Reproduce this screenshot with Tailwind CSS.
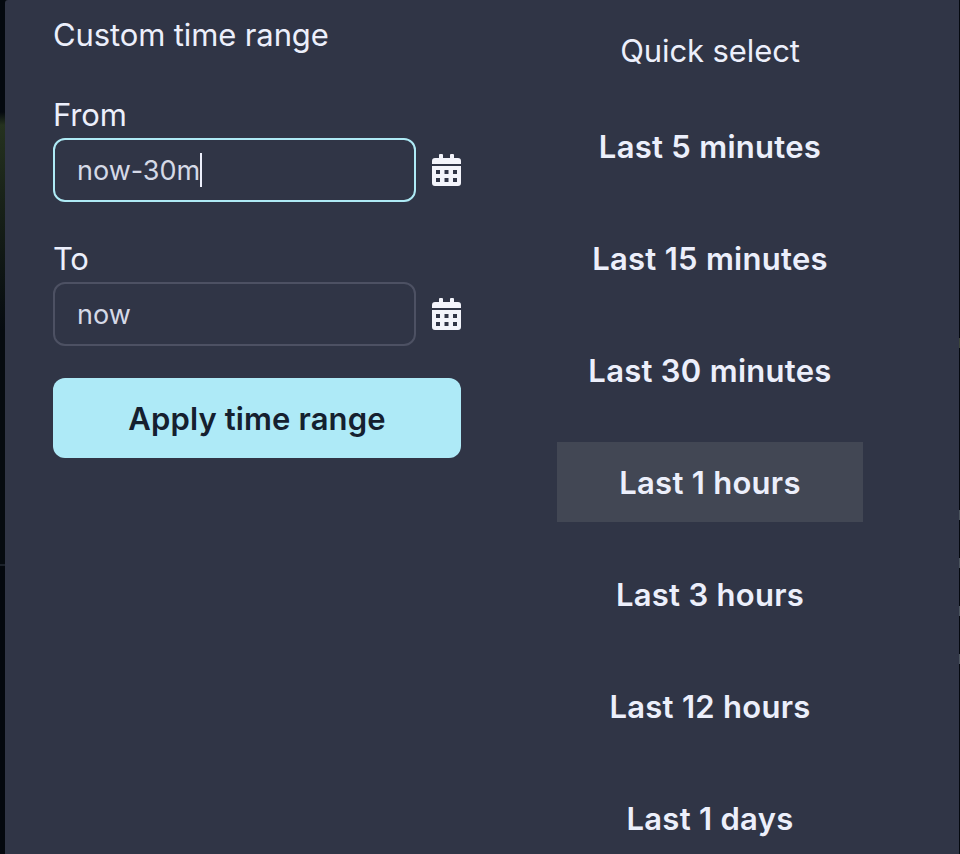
<!DOCTYPE html>
<html lang="en">
<head>
<meta charset="utf-8">
<title>Time range</title>
<script src="https://cdn.jsdelivr.net/npm/@tailwindcss/browser@4"></script>
</head>
<body class="bg-[#05090f] font-['Inter',sans-serif] text-[31px] leading-[48px] text-[#eceffb]">
<div class="flex h-[854px] w-[960px] overflow-hidden">
  <div class="w-[5px] shrink-0 bg-[linear-gradient(#04090f_112px,#25321f_125px,#1a2419_190px,#060b10_330px,#060b10_564px,#1c222b_564px,#1c222b_566px,#04080e_566px)]"></div>
  <main class="flex w-[954px] shrink-0 rounded-tl-[3px] bg-[#303546] pl-12">
    <section class="w-[408px] shrink-0 pt-[11px]">
      <h2 class="whitespace-nowrap tracking-[-0.12px]">Custom time range</h2>
      <form>
        <label class="mt-8 block h-[47px] tracking-[-0.1px]">From</label>
        <div class="flex items-center gap-4">
          <div class="flex h-16 w-[363px] items-center rounded-xl border-2 border-[#aeeaf5] px-[22px] text-[27px] text-[#d5d9e6]"><span class="pt-0.5">now-30m</span><span class="h-[34px] w-[2px] bg-[#eceffb]"></span></div>
          <svg class="h-8 w-[29px] shrink-0" viewBox="0 0 29 32" fill="#f3f4fb"><path d="M0 10V7q0-3 3-3h4V1q0-1 1-1h2q1 0 1 1v3h7V1q0-1 1-1h2q1 0 1 1v3h4q3 0 3 3v3z"/><path fill-rule="evenodd" d="M0 12h29v17q0 3-3 3H3q-3 0-3-3zM4 16v4h4v-4zM12.500 16v4h4v-4zM21 16v4h4v-4zM4 24v4h4v-4zM12.500 24v4h4v-4zM21 24v4h4v-4z"/></svg>
        </div>
        <label class="mt-[33px] block h-[47px] tracking-[-0.4px]">To</label>
        <div class="flex items-center gap-4">
          <div class="flex h-16 w-[363px] items-center rounded-xl border-2 border-[#4d5163] px-[22px] text-[27px] text-[#d5d9e6]"><span class="pt-0.5">now</span></div>
          <svg class="h-8 w-[29px] shrink-0" viewBox="0 0 29 32" fill="#f3f4fb"><path d="M0 10V7q0-3 3-3h4V1q0-1 1-1h2q1 0 1 1v3h7V1q0-1 1-1h2q1 0 1 1v3h4q3 0 3 3v3z"/><path fill-rule="evenodd" d="M0 12h29v17q0 3-3 3H3q-3 0-3-3zM4 16v4h4v-4zM12.500 16v4h4v-4zM21 16v4h4v-4zM4 24v4h4v-4zM12.500 24v4h4v-4zM21 24v4h4v-4z"/></svg>
        </div>
        <button type="button" class="mt-8 flex h-20 w-full items-center justify-center rounded-xl bg-[#aeeaf7] pt-px font-semibold tracking-[0.13px] text-[#15202f]">Apply time range</button>
      </form>
    </section>
    <section class="ml-24 flex w-[306px] shrink-0 flex-col pt-[27px] text-center">
      <h2 class="mb-[31px] tracking-[-0.1px]">Quick select</h2>
      <div class="flex flex-col gap-8 font-semibold tracking-[0.28px]">
        <button type="button" class="h-20 shrink-0 pt-0.5">Last 5 minutes</button>
        <button type="button" class="h-20 shrink-0 pt-0.5">Last 15 minutes</button>
        <button type="button" class="h-20 shrink-0 pt-0.5">Last 30 minutes</button>
        <button type="button" class="h-20 shrink-0 bg-[#424754] pt-0.5">Last 1 hours</button>
        <button type="button" class="h-20 shrink-0 pt-0.5">Last 3 hours</button>
        <button type="button" class="h-20 shrink-0 pt-0.5">Last 12 hours</button>
        <button type="button" class="h-20 shrink-0 pt-0.5">Last 1 days</button>
      </div>
    </section>
  </main>
  <div class="flex w-px shrink-0 flex-col gap-[38px] pt-[338px]">
    <i class="mb-[124px] h-[10px] bg-[#3b4437]"></i>
    <i class="h-[10px] bg-[#4a535c]"></i>
    <i class="h-[10px] bg-[#4a535c]"></i>
    <i class="h-[10px] bg-[#4a535c]"></i>
    <i class="h-[10px] bg-[#4a535c]"></i>
  </div>
</div>
</body>
</html>
